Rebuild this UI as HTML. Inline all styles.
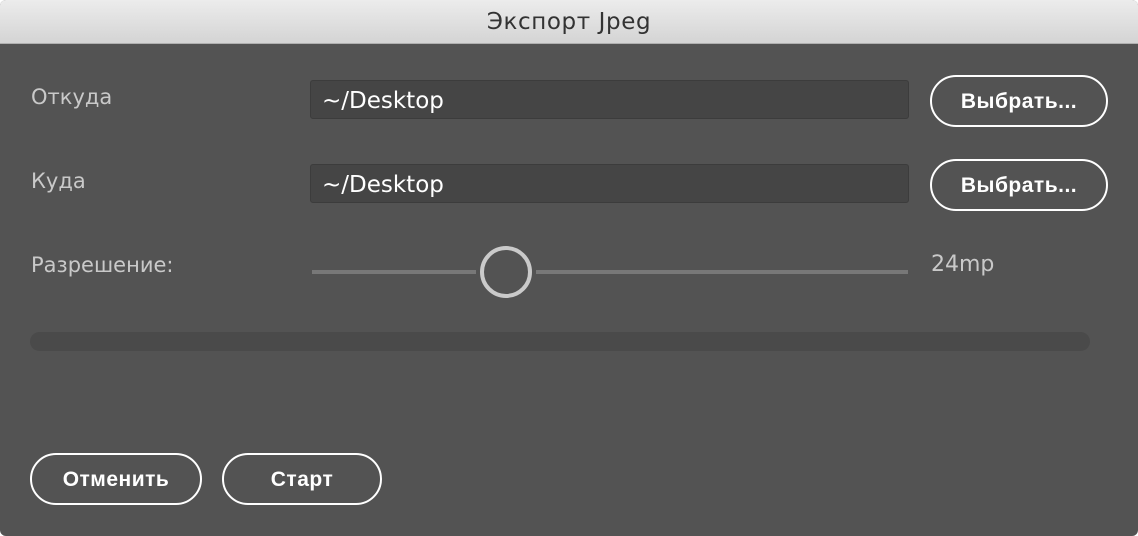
<!DOCTYPE html>
<html><head><meta charset="utf-8"><style>
html,body{margin:0;padding:0;background:#fff;}
body{width:1138px;height:536px;position:relative;overflow:hidden;font-family:"DejaVu Sans","Liberation Sans",sans-serif;}
.win{position:absolute;left:0;top:0;width:1138px;height:536px;background:#535353;border-radius:6px;overflow:hidden;}
.title{position:absolute;left:0;top:0;width:1138px;height:43px;background:linear-gradient(#ececec,#d4d4d4);border-bottom:1px solid #b0b0b0;text-align:center;line-height:44px;font-size:23px;letter-spacing:0.6px;color:#333;}
.lbl{position:absolute;left:31px;font-size:21px;color:#c9c9c9;line-height:24px;}
.inp{position:absolute;left:310px;height:37px;background:#454545;border:1px solid #3c3c3c;border-radius:3px;color:#fff;font-size:23px;line-height:40px;padding-left:11px;width:586px;}
.btn{position:absolute;border:2px solid #fff;border-radius:27px;box-sizing:border-box;height:52px;color:#fff;font-size:21px;font-weight:bold;font-family:"Liberation Sans",sans-serif;letter-spacing:0.5px;text-align:center;line-height:50px;}
.track{position:absolute;top:270px;height:4px;background:#787878;}
.knob{position:absolute;left:480px;top:246px;width:52px;height:52px;border:4px solid #cacaca;border-radius:50%;box-sizing:border-box;}
.prog{position:absolute;left:30px;top:332px;width:1060px;height:19px;background:#4a4a4a;border-radius:10px;}
</style></head><body>
<div class="win">
<div class="title">Экспорт Jpeg</div>
<div class="lbl" style="top:85px">Откуда</div>
<div class="inp" style="top:80px">~/Desktop</div>
<div class="btn" style="left:930px;top:75px;width:178px">Выбрать...</div>
<div class="lbl" style="top:169px">Куда</div>
<div class="inp" style="top:164px">~/Desktop</div>
<div class="btn" style="left:930px;top:159px;width:178px">Выбрать...</div>
<div class="lbl" style="top:253px">Разрешение:</div>
<div class="track" style="left:312px;width:164px"></div>
<div class="track" style="left:536px;width:372px"></div>
<div class="knob"></div>
<div class="lbl" style="left:931px;top:253px;font-size:22px">24mp</div>
<div class="prog"></div>
<div class="btn" style="left:30px;top:453px;width:172px">Отменить</div>
<div class="btn" style="left:222px;top:453px;width:160px">Старт</div>
</div>
</body></html>
